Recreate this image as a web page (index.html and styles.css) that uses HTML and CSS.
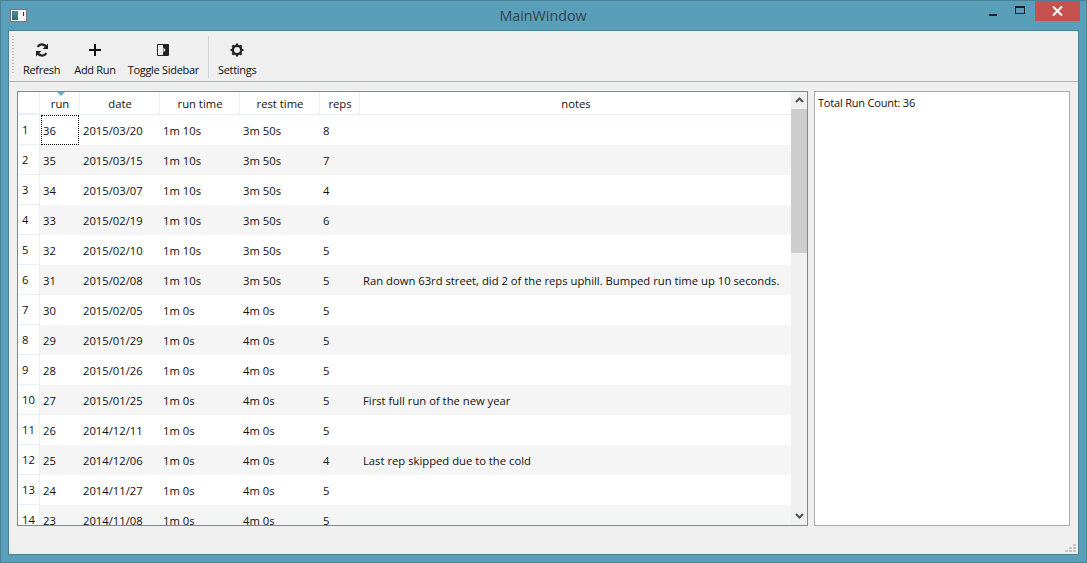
FILE: index.html
```html
<!DOCTYPE html>
<html lang="en">
    <head>
        <meta charset="UTF-8" />
        <title>MainWindow</title>
        <link rel="stylesheet" href="styles.css">
    </head>
    <body>
        <header class="titlebar">
            <span class="appicon"><span class="appicon-fill"></span><span class="appicon-mark"></span></span>
            <h1 class="title">MainWindow</h1>
            <div class="winbtns">
                <span class="winbtn"><span class="minimize"></span></span>
                <span class="winbtn"><span class="maximize"></span></span>
                <span class="winbtn close">
                    <svg width="11" height="10" viewBox="0 0 11 10"><path d="M1 0.5 L10 9.5 M10 0.5 L1 9.5" stroke="#fff" stroke-width="2" fill="none"/></svg>
                </span>
            </div>
        </header>
        <main class="client">
            <nav class="toolbar">
                <div class="grip"></div>
                <button class="tool tool-refresh">
                    <svg width="16" height="16" viewBox="0 0 16 16"><path d="M13 6.500A5.200 5.200 0 0 0 3.600 4.800M3 9.500a5.200 5.200 0 0 0 9.400 1.700" stroke="#222" stroke-width="2.200" fill="none"/><path d="M14 1.600V7H8.800zM2 14.400V9h5.200z" fill="#222"/></svg>
                    <span>Refresh</span>
                </button>
                <button class="tool tool-add">
                    <svg width="16" height="16" viewBox="0 0 16 16"><path d="M8 2V14M2 8H14" stroke="#111" stroke-width="2" fill="none"/></svg>
                    <span>Add Run</span>
                </button>
                <button class="tool tool-sidebar">
                    <svg width="16" height="16" viewBox="0 0 16 16"><path d="M2.500 2.500H13.500V13.500H2.500Z" stroke="#222" fill="none"/><rect x="8" y="3" width="5" height="10" fill="#222"/><path d="M8.500 5.500 10.500 8 8.500 10.500Z" fill="#fff"/></svg>
                    <span>Toggle Sidebar</span>
                </button>
                <div class="sep"></div>
                <button class="tool tool-settings">
                    <svg width="16" height="16" viewBox="0 0 16 16"><circle cx="8" cy="8" r="4.200" stroke="#222" stroke-width="2.400" fill="none"/><path d="M8 1.500V14.500M1.500 8H14.500M3.400 3.400 12.600 12.600M12.600 3.400 3.400 12.600" stroke="#222" stroke-width="2.200"/><circle cx="8" cy="8" r="3" fill="#efefef"/></svg>
                    <span>Settings</span>
                </button>
            </nav>
            <section class="content">
                <div class="tablebox">
                    <div class="tablearea">
                        <div class="row head">
                            <div class="rowno"></div>
                            <div class="cell c-run">run<span class="sort"></span></div>
                            <div class="cell c-date">date</div>
                            <div class="cell c-time">run time</div>
                            <div class="cell c-rest">rest time</div>
                            <div class="cell c-reps">reps</div>
                            <div class="cell c-notes">notes</div>
                        </div>
                        <div class="row"><div class="rowno">1</div><div class="cell c-run current">36</div><div class="cell c-date">2015/03/20</div><div class="cell c-time">1m 10s</div><div class="cell c-rest">3m 50s</div><div class="cell c-reps">8</div><div class="cell c-notes"></div></div>
                        <div class="row alt"><div class="rowno">2</div><div class="cell c-run">35</div><div class="cell c-date">2015/03/15</div><div class="cell c-time">1m 10s</div><div class="cell c-rest">3m 50s</div><div class="cell c-reps">7</div><div class="cell c-notes"></div></div>
                        <div class="row"><div class="rowno">3</div><div class="cell c-run">34</div><div class="cell c-date">2015/03/07</div><div class="cell c-time">1m 10s</div><div class="cell c-rest">3m 50s</div><div class="cell c-reps">4</div><div class="cell c-notes"></div></div>
                        <div class="row alt"><div class="rowno">4</div><div class="cell c-run">33</div><div class="cell c-date">2015/02/19</div><div class="cell c-time">1m 10s</div><div class="cell c-rest">3m 50s</div><div class="cell c-reps">6</div><div class="cell c-notes"></div></div>
                        <div class="row"><div class="rowno">5</div><div class="cell c-run">32</div><div class="cell c-date">2015/02/10</div><div class="cell c-time">1m 10s</div><div class="cell c-rest">3m 50s</div><div class="cell c-reps">5</div><div class="cell c-notes"></div></div>
                        <div class="row alt"><div class="rowno">6</div><div class="cell c-run">31</div><div class="cell c-date">2015/02/08</div><div class="cell c-time">1m 10s</div><div class="cell c-rest">3m 50s</div><div class="cell c-reps">5</div><div class="cell c-notes">Ran down 63rd street, did 2 of the reps uphill. Bumped run time up 10 seconds.</div></div>
                        <div class="row"><div class="rowno">7</div><div class="cell c-run">30</div><div class="cell c-date">2015/02/05</div><div class="cell c-time">1m 0s</div><div class="cell c-rest">4m 0s</div><div class="cell c-reps">5</div><div class="cell c-notes"></div></div>
                        <div class="row alt"><div class="rowno">8</div><div class="cell c-run">29</div><div class="cell c-date">2015/01/29</div><div class="cell c-time">1m 0s</div><div class="cell c-rest">4m 0s</div><div class="cell c-reps">5</div><div class="cell c-notes"></div></div>
                        <div class="row"><div class="rowno">9</div><div class="cell c-run">28</div><div class="cell c-date">2015/01/26</div><div class="cell c-time">1m 0s</div><div class="cell c-rest">4m 0s</div><div class="cell c-reps">5</div><div class="cell c-notes"></div></div>
                        <div class="row alt"><div class="rowno">10</div><div class="cell c-run">27</div><div class="cell c-date">2015/01/25</div><div class="cell c-time">1m 0s</div><div class="cell c-rest">4m 0s</div><div class="cell c-reps">5</div><div class="cell c-notes">First full run of the new year</div></div>
                        <div class="row"><div class="rowno">11</div><div class="cell c-run">26</div><div class="cell c-date">2014/12/11</div><div class="cell c-time">1m 0s</div><div class="cell c-rest">4m 0s</div><div class="cell c-reps">5</div><div class="cell c-notes"></div></div>
                        <div class="row alt"><div class="rowno">12</div><div class="cell c-run">25</div><div class="cell c-date">2014/12/06</div><div class="cell c-time">1m 0s</div><div class="cell c-rest">4m 0s</div><div class="cell c-reps">4</div><div class="cell c-notes">Last rep skipped due to the cold</div></div>
                        <div class="row"><div class="rowno">13</div><div class="cell c-run">24</div><div class="cell c-date">2014/11/27</div><div class="cell c-time">1m 0s</div><div class="cell c-rest">4m 0s</div><div class="cell c-reps">5</div><div class="cell c-notes"></div></div>
                        <div class="row alt"><div class="rowno">14</div><div class="cell c-run">23</div><div class="cell c-date">2014/11/08</div><div class="cell c-time">1m 0s</div><div class="cell c-rest">4m 0s</div><div class="cell c-reps">5</div><div class="cell c-notes"></div></div>
                    </div>
                    <div class="scrollbar">
                        <svg class="arrow" width="9" height="6" viewBox="0 0 9 6"><path d="M1 5 4.500 1.500 8 5" stroke="#555" stroke-width="2" fill="none"/></svg>
                        <div class="track"><div class="thumb"></div></div>
                        <svg class="arrow" width="9" height="6" viewBox="0 0 9 6"><path d="M1 1 4.500 4.500 8 1" stroke="#555" stroke-width="2" fill="none"/></svg>
                    </div>
                </div>
                <aside class="sidebar">Total Run Count: 36</aside>
            </section>
            <footer class="statusbar">
                <svg width="12" height="9" viewBox="0 0 12 9"><path d="M8 0h3v2H8zM4 3h3v2H4zM8 3h3v2H8zM0 6h3v2H0zM4 6h3v2H4zM8 6h3v2H8z" fill="#c4c4c4"/></svg>
            </footer>
        </main>
    </body>
</html>
```

FILE: styles.css
```css
html, body {
    height: 100%;
}
body {
    margin: 0;
    background: #5a9fba;
    font: normal 11.25px "Open Sans", "Noto Sans", sans-serif;
    color: #111;
    overflow: hidden;
    display: flex;
    flex-direction: column;
    box-sizing: border-box;
    border: 1px solid #4b8296;
}

/* title bar */
.titlebar {
    height: 29px;
    display: flex;
    align-items: center;
    padding-left: 9px;
    flex: none;
}
.appicon {
    width: 15px;
    height: 11px;
    background: #f4f4f4;
    border: 1px solid #777;
    display: flex;
    justify-content: space-between;
}
.appicon-fill {
    display: block;
    width: 6px;
    height: 9px;
    margin: 1px;
    background: linear-gradient(#4a8f8c, #2f6f78);
}
.appicon-mark {
    display: block;
    width: 1px;
    height: 4px;
    margin: 2px 2px 0 0;
    background: #333;
}
.title {
    flex: 1;
    margin: 0;
    text-align: center;
    font-size: 14.3px;
    font-weight: normal;
    color: #2f4550;
    padding-left: 79px;
}
.winbtns {
    display: flex;
    align-items: flex-start;
    height: 100%;
    margin-right: 6px;
}
.winbtn {
    width: 26px;
    height: 20px;
    display: flex;
    align-items: center;
    justify-content: center;
}
.minimize {
    width: 8px;
    height: 2px;
    background: #222;
    margin-top: 8px;
}
.maximize {
    width: 8px;
    height: 5px;
    border: 1px solid #222;
    border-top-width: 2px;
    margin: 0 0 2px 2px;
}
.winbtn.close {
    width: 45px;
    margin-left: 3px;
    background: #c75050;
}

/* window contents */
.client {
    flex: 1;
    margin: 0 7px 7px;
    background: #efefef;
    border: 1px solid #4b8296;
    display: flex;
    flex-direction: column;
    min-height: 0;
}
.toolbar {
    height: 50px;
    flex: none;
    display: flex;
    align-items: flex-start;
    border-bottom: 1px solid #b4b4b4;
    padding-left: 3px;
}
.grip {
    width: 2px;
    height: 38px;
    margin: 5px 6px 0 0;
    background: repeating-linear-gradient(#bbb 0 1px, transparent 1px 3px);
}
.tool {
    border: 0;
    background: none;
    padding: 11px 0 0;
    margin: 0;
    font: inherit;
    font-size: 11px;
    letter-spacing: -0.3px;
    color: #111;
    display: flex;
    flex-direction: column;
    align-items: center;
    gap: 4px;
}
.tool span {
    line-height: 16px;
}
.tool-refresh { margin-left: 3px; }
.tool-add { margin-left: 14px; }
.tool-sidebar { margin-left: 12px; }
.tool-settings { margin-left: 9px; }
.sep {
    width: 1px;
    height: 42px;
    margin: 5px 0 0 9px;
    background: #d2d2d2;
}

.content {
    flex: 1;
    min-height: 0;
    display: flex;
    gap: 6px;
    padding: 9px 8px 0;
}
.tablebox {
    width: 791px;
    height: 435px;
    box-sizing: border-box;
    background: #fff;
    border: 1px solid #828790;
    display: flex;
}
.tablearea {
    flex: 1;
    min-width: 0;
    overflow: hidden;
}
.row {
    display: flex;
    height: 30px;
}
.row.alt {
    background: #f5f5f5;
}
.row.head {
    height: 23px;
    background: #fff;
    border-bottom: 1px solid #e6f0fa;
    box-sizing: border-box;
}
.rowno {
    width: 22px;
    flex: none;
    box-sizing: border-box;
    padding: 0 0 1px 4px;
    background: #fff;
    border-right: 1px solid #e6f0fa;
    border-bottom: 1px solid #e6f0fa;
    display: flex;
    align-items: center;
}
.cell {
    flex: none;
    box-sizing: border-box;
    padding: 1px 0 0 3px;
    display: flex;
    align-items: center;
    white-space: nowrap;
}
.c-run { width: 40px; }
.c-date { width: 80px; }
.c-time { width: 80px; }
.c-rest { width: 80px; }
.c-reps { width: 40px; }
.c-notes { flex: 1; min-width: 0; }
.head .cell {
    justify-content: center;
    padding: 0 0 0 1px;
    border-right: 1px solid #e6f0fa;
    position: relative;
}
.head .c-notes {
    border-right: 0;
}
.sort {
    position: absolute;
    top: 0;
    left: 17px;
    border-left: 4px solid transparent;
    border-right: 4px solid transparent;
    border-top: 4px solid #6aa8d8;
}
.cell.current {
    outline: 1px dotted #000;
    outline-offset: -1px;
    padding-left: 2px;
    margin: 0 1px;
    width: 38px;
}
.scrollbar {
    width: 16px;
    flex: none;
    display: flex;
    flex-direction: column;
    align-items: center;
    background: #f0f0f0;
}
.arrow {
    flex: none;
    margin: 5px 0 6px;
}
.track {
    flex: 1;
    width: 100%;
}
.thumb {
    height: 144px;
    background: #cdcdcd;
}
.sidebar {
    width: 256px;
    height: 435px;
    box-sizing: border-box;
    background: #fff;
    border: 1px solid #acacac;
    padding: 3px;
    font-size: 11px;
    letter-spacing: -0.2px;
}
.statusbar {
    height: 29px;
    flex: none;
    display: flex;
    justify-content: flex-end;
    align-items: flex-end;
    padding: 0 1px 1px 0;
}
```
